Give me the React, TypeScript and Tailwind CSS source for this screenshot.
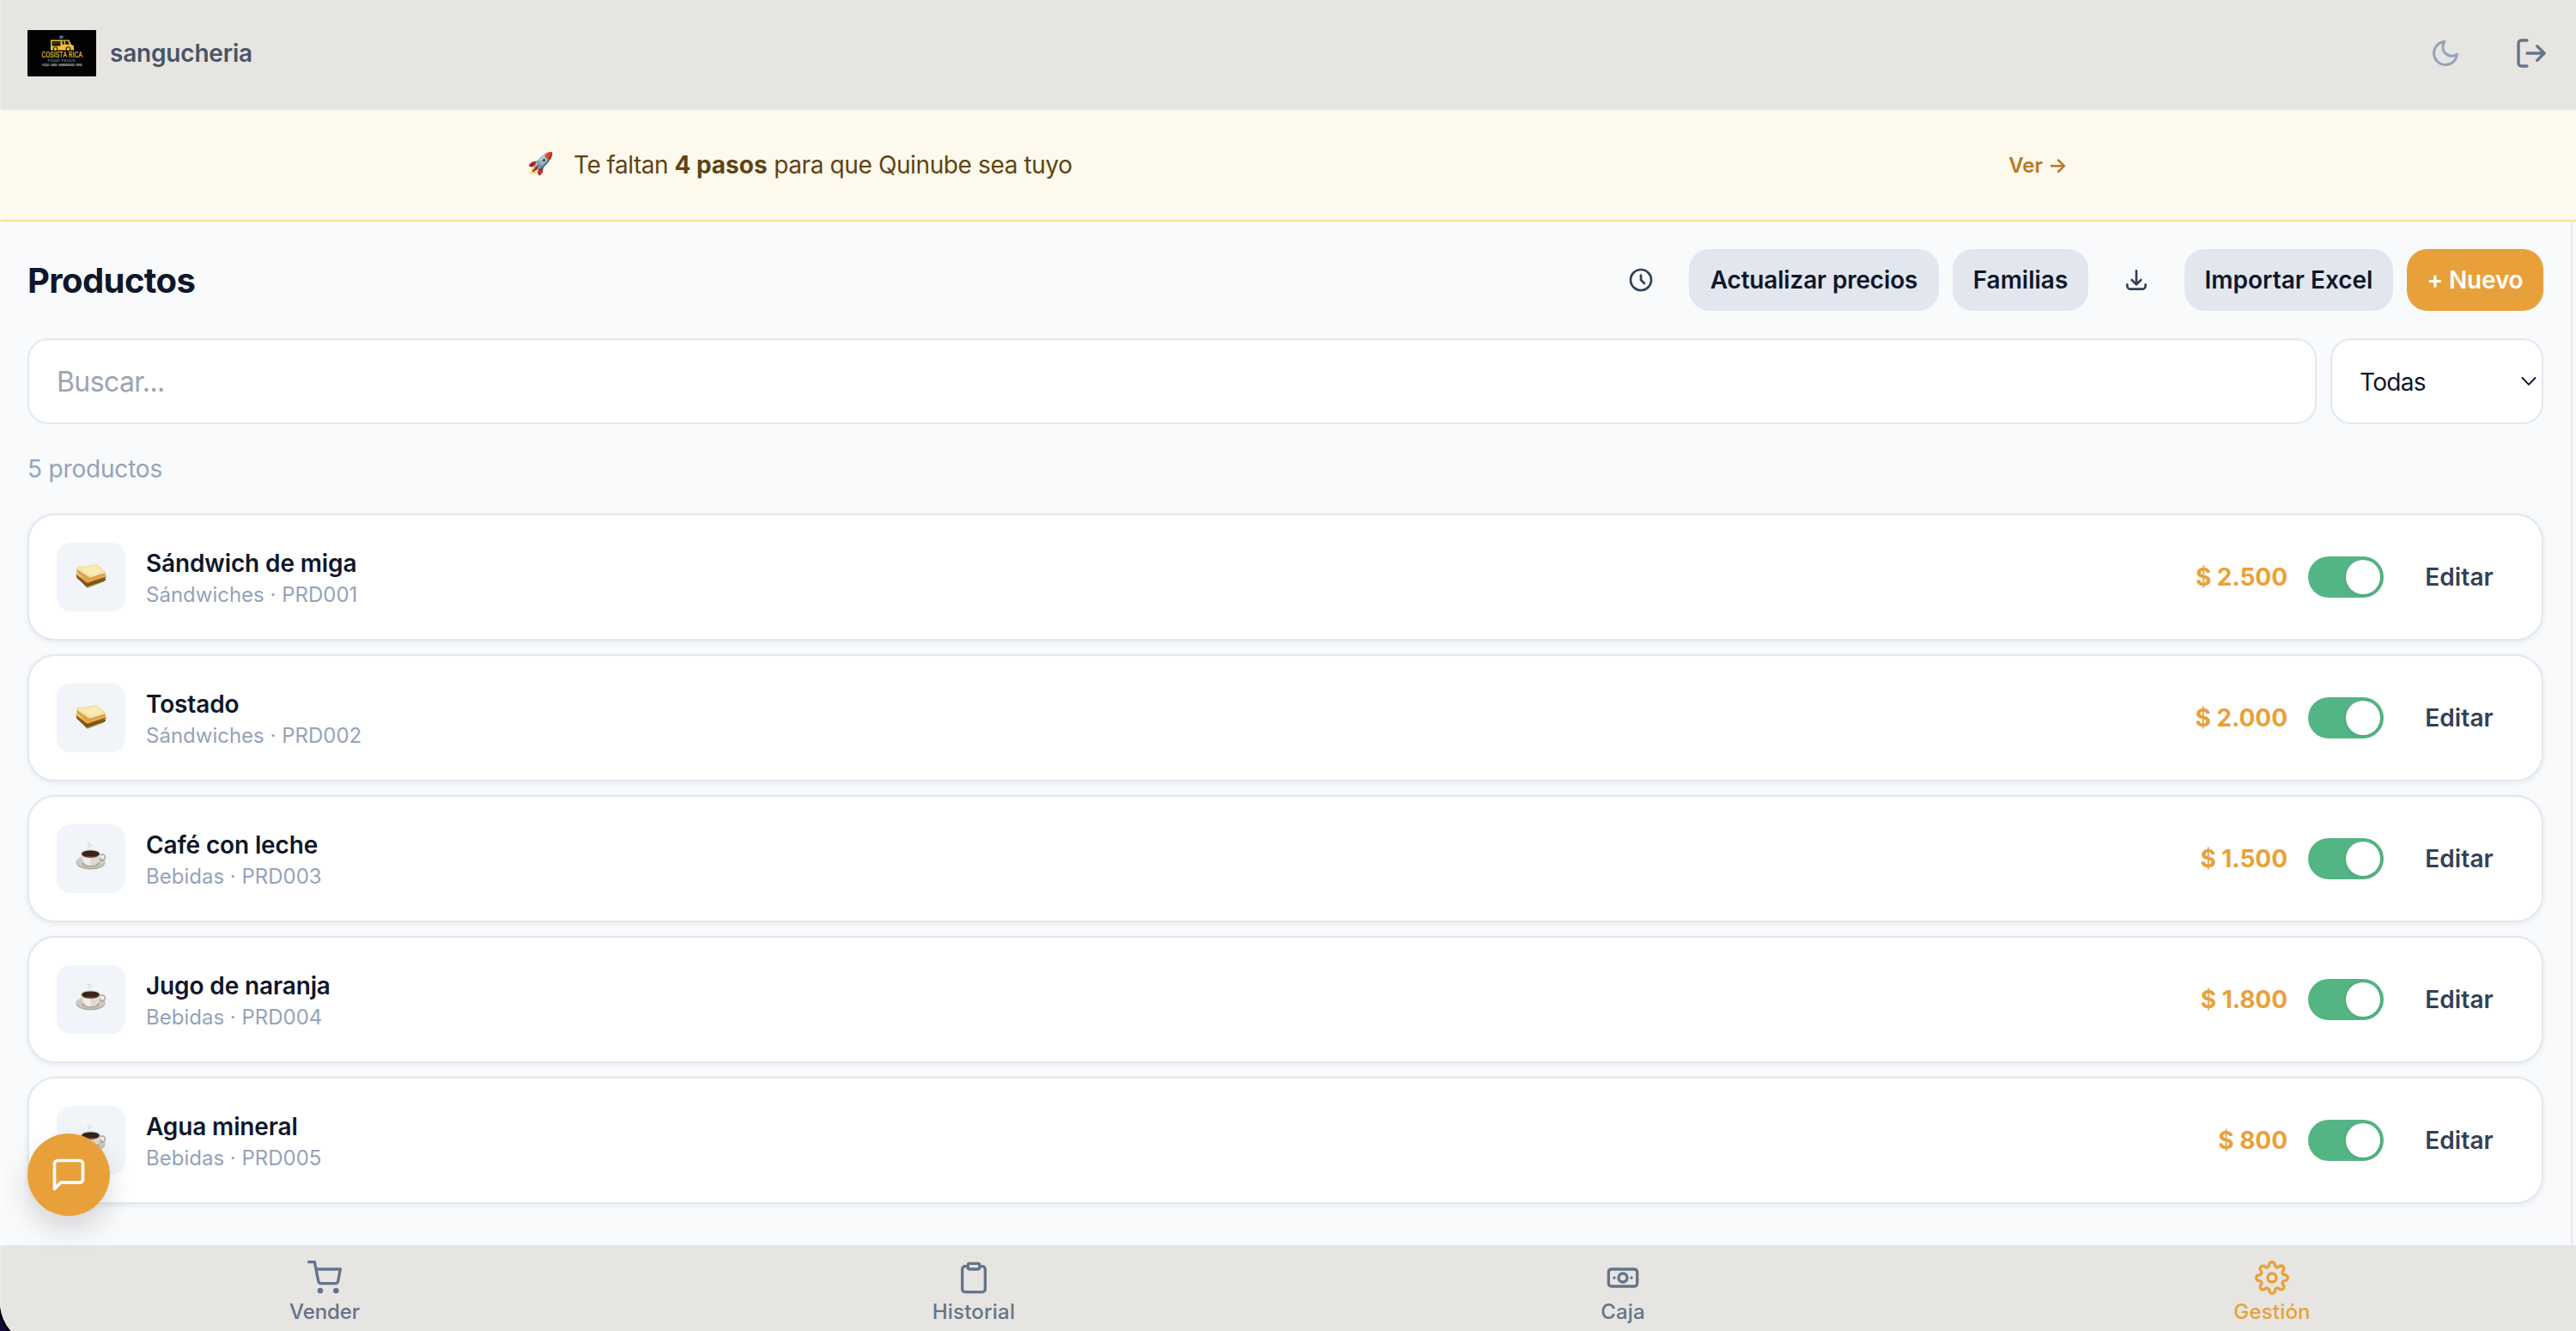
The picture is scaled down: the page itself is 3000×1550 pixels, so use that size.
import React from "react";

type Product = {
  name: string;
  category: string;
  code: string;
  price: string;
};

const products: Product[] = [
  { name: "Sándwich de miga", category: "Sándwiches", code: "PRD001", price: "$ 2.500" },
  { name: "Tostado", category: "Sándwiches", code: "PRD002", price: "$ 2.000" },
  { name: "Café con leche", category: "Bebidas", code: "PRD003", price: "$ 1.500" },
  { name: "Jugo de naranja", category: "Bebidas", code: "PRD004", price: "$ 1.800" },
  { name: "Agua mineral", category: "Bebidas", code: "PRD005", price: "$ 800" },
];

function Icon({
  className,
  width = 2,
  children,
}: {
  className: string;
  width?: number;
  children: React.ReactNode;
}) {
  return (
    <svg
      viewBox="0 0 24 24"
      fill="none"
      stroke="currentColor"
      strokeWidth={width}
      strokeLinecap="round"
      strokeLinejoin="round"
      className={className}
    >
      {children}
    </svg>
  );
}

function Sandwich() {
  return (
    <svg viewBox="0 0 36 30" className="mb-[3px] h-[30px] w-9">
      <path d="M1.500 15.500L12 27.500q.8 1.500 2.500.9L33 21.500q1.800-1 1.500-3.500L20 17z" fill="#c98a3c" />
      <path d="M1 14l11.500 10.500L35 17.500v2.300L13 27.200 1.200 16.800z" fill="#3f6b22" />
      <path d="M.8 12.500l11.700 9.500L35.300 15v2L13 24.800.8 14.800z" fill="#b8402a" />
      <path d="M.6 10.500l12.400 9.200L35.500 13v2.200L14 22.600.6 13z" fill="#f2b93f" />
      <path d="M1.500 5v5.500L13.500 20q1.500 1 3 .3L34.500 14q.8-2-.2-4.500z" fill="#d9a253" />
      <path
        d="M1.500 5.500Q1.500 3.500 4 3.300L8 3.500 23 .9q2-.3 3 1.200L34.500 9.500q.6 1.200-.9 1.900L18 16.300q-1.800.5-3-.5L2 7.300q-.6-.8-.5-1.800z"
        fill="#f5e3a1"
      />
      <path d="M5 5.200l4 .2L23.500 2.800l8 6.800-14.300 4.500z" fill="#f9ebb5" />
    </svg>
  );
}

function Coffee() {
  return (
    <svg viewBox="0 0 36 33" className="mb-[5px] h-[33px] w-9">
      <path
        d="M14 1.500q2-1 2.500.8t2.500 1M14.500 4q1.800 0 2 2"
        fill="none"
        stroke="#c9c9ca"
        strokeWidth="1"
        strokeLinecap="round"
      />
      <ellipse cx="17.500" cy="23.500" rx="17" ry="8" fill="#b3ada3" />
      <ellipse cx="17.500" cy="22.500" rx="16.500" ry="7.200" fill="#cfcac1" />
      <ellipse cx="17.500" cy="24.500" rx="10" ry="4" fill="#a39c90" />
      <circle cx="31" cy="17.500" r="3.400" fill="none" stroke="#a8a299" strokeWidth="1.500" />
      <path d="M6 13.500q.3 9.500 5.500 12.700 6 2.200 12 0 5.200-3.200 5.500-12.700z" fill="#dedad3" />
      <path d="M8.500 18q1 6 4.500 8 2.200.9 4.500.9V18z" fill="#efedea" />
      <ellipse cx="17.500" cy="13.300" rx="11.500" ry="5" fill="#d3cec6" />
      <ellipse cx="17.500" cy="13.500" rx="10.300" ry="4.100" fill="#3b2218" />
      <path d="M8.500 15.500q9 4 18 0-9 1.200-18 0z" fill="#6b4431" />
    </svg>
  );
}

function Logo() {
  return (
    <svg viewBox="0 0 80 54" className="h-[54px] w-20 shrink-0">
      <rect width="80" height="54" rx="1" fill="#020202" />
      <path d="M37 10l1-4 3 1 2 1-2 1-1 1z" fill="#3f7f93" />
      <path d="M27 11.500h21.500l2.500 5.500 3 1.200V23.500H27z" fill="#edbd3c" />
      <path d="M28.500 13h10v5.500h-10zM40.500 12.800h2.200v4h-2.200zM44 12.800h3.200l1.600 4H44z" fill="#1c1708" />
      <path d="M28.500 15h10" stroke="#8a6b1c" strokeWidth="0.6" />
      <circle cx="32.500" cy="22" r="2.400" fill="#edbd3c" stroke="#020202" strokeWidth="1" />
      <circle cx="47.500" cy="22" r="2.400" fill="#edbd3c" stroke="#020202" strokeWidth="1" />
      <text
        x="16.500"
        y="32.400"
        textLength="47.500"
        lengthAdjust="spacingAndGlyphs"
        fontFamily="Roboto, sans-serif"
        fontWeight="500"
        fontSize="9.600"
        fill="#e3b63b"
      >
        COSISTA RICA
      </text>
      <text
        x="23.500"
        y="36.900"
        textLength="32.500"
        lengthAdjust="spacingAndGlyphs"
        fontFamily="Roboto, sans-serif"
        fontWeight="600"
        fontSize="4"
        fill="#44798a"
      >
        FOOD TRUCK
      </text>
      <text
        x="17"
        y="41.500"
        textLength="46.500"
        lengthAdjust="spacingAndGlyphs"
        fontFamily="Roboto, sans-serif"
        fontWeight="700"
        fontSize="2.600"
        fill="#c4c4c4"
      >
        PIZZAS · LOMOS · HAMBURGUESAS · PAPAS
      </text>
    </svg>
  );
}

function Header() {
  return (
    <header className="flex h-32 items-center border-b-2 border-[#e2e8f0] bg-[#e7e5e1] pr-14 pb-0.5 pl-8">
      <Logo />
      <span className="ml-4 text-[28px] font-semibold tracking-[-0.19px] text-[#475569]">
        sangucheria
      </span>
      <div className="ml-auto flex items-center gap-[62px]">
        <Icon className="size-9 text-[#94a3b8]">
          <path d="M21 12.790A9 9 0 1 1 11.210 3 7 7 0 0 0 21 12.790z" />
        </Icon>
        <Icon className="size-10 text-[#64748b]">
          <path d="M9 21H5a2 2 0 0 1-2-2V5a2 2 0 0 1 2-2h4" />
          <path d="M16 17l5-5-5-5" />
          <path d="M21 12H9" />
        </Icon>
      </div>
    </header>
  );
}

function Banner() {
  return (
    <div className="h-[130px] border-b-2 border-[#fadf9b] bg-[#fdf9ec]">
      <div className="mx-auto flex h-full w-[1792px] items-center text-[28px] text-[#5f4314]">
        <span className="-ml-0.5 w-[54px] pb-0.5 text-[25px]">🚀</span>
        <span className="whitespace-pre">
          <span className="tracking-[-0.5px]">Te faltan </span>
          <strong className="font-bold">4 pasos</strong>
          <span className="tracking-[-0.38px]"> para que Quinube sea tuyo</span>
        </span>
        <span className="ml-auto pt-px text-[24px] font-semibold text-[#b9781d]">Ver →</span>
      </div>
    </div>
  );
}

function Toolbar() {
  return (
    <div className="flex items-center">
      <h1 className="pt-0.5 text-[40px] font-bold tracking-[-0.59px] text-[#0f172a]">Productos</h1>
      <div className="ml-auto flex h-[72px] items-center gap-4 text-[28px] font-semibold text-[#0f172a]">
        <button className="flex h-full w-20 items-center justify-center">
          <Icon className="size-8 text-[#334155]">
            <path d="M12 8v4l3 3m6-3a9 9 0 11-18 0 9 9 0 0118 0z" />
          </Icon>
        </button>
        <button className="h-full w-[291px] rounded-3xl bg-[#e2e6ee] tracking-[-0.18px]">
          Actualizar precios
        </button>
        <button className="h-full w-[158px] rounded-3xl bg-[#e2e6ee]">Familias</button>
        <button className="flex h-full w-20 items-center justify-center">
          <Icon className="size-8 text-[#334155]">
            <path d="M4 16v1a3 3 0 003 3h10a3 3 0 003-3v-1m-4-4l-4 4m0 0l-4-4m4 4V4" />
          </Icon>
        </button>
        <button className="h-full w-[243px] rounded-3xl bg-[#e2e6ee]">Importar Excel</button>
        <button className="h-full w-[159px] rounded-3xl bg-[#e8a13a] tracking-[-0.2px] text-white">
          + Nuevo
        </button>
      </div>
    </div>
  );
}

function Filters() {
  return (
    <div className="mt-8 flex h-[100px] gap-4">
      <div className="flex flex-1 items-center rounded-3xl border-2 border-[#e2e8f0] bg-white px-8 pt-0.5 text-[32px] tracking-[-0.6px] text-[#9ca3af]">
        Buscar...
      </div>
      <div className="flex w-[248px] items-center rounded-3xl border-2 border-[#e2e8f0] bg-white pr-1.5 pl-8 text-[28px] tracking-[-0.7px] text-[#0f172a]">
        <span className="pt-0.5">Todas</span>
        <svg viewBox="0 0 18 12" className="ml-auto h-3 w-[18px]" fill="none">
          <path
            d="M1.500 2l7.500 7.800 7.500-7.800"
            stroke="currentColor"
            strokeWidth="1.900"
            strokeLinecap="round"
            strokeLinejoin="round"
          />
        </svg>
      </div>
    </div>
  );
}

function ProductCard({ product }: { product: Product }) {
  return (
    <div className="flex h-[148px] items-center rounded-[32px] border-2 border-[#e2e8f0] bg-white px-8 shadow-[0_2px_6px_rgba(15,23,42,0.07)]">
      <div className="flex size-20 items-center justify-center rounded-2xl bg-[#f1f5f9]">
        {product.category === "Bebidas" ? <Coffee /> : <Sandwich />}
      </div>
      <div className="ml-6">
        <div className="text-[28px] leading-[42px] font-semibold tracking-[-0.13px] text-[#0f172a]">
          {product.name}
        </div>
        <div className="text-[24px] leading-8 text-[#94a3b8]">
          {product.category} · {product.code}
        </div>
      </div>
      <div className="ml-auto flex items-center gap-6">
        <span className="text-[28px] font-bold tracking-[-0.05px] text-[#e8a13a]">
          {product.price}
        </span>
        <div className="flex h-12 w-[88px] items-center justify-end rounded-full bg-[#54b584] p-1">
          <div className="size-10 rounded-full bg-white shadow-[0_1px_4px_rgba(0,0,0,0.12)]" />
        </div>
        <button className="w-32 text-[28px] font-semibold tracking-[0.1px] text-[#334155]">
          Editar
        </button>
      </div>
    </div>
  );
}

const tabs = [
  {
    label: "Vender",
    color: "text-[#64748b]",
    tracking: "tracking-[-0.1px]",
    icon: (
      <>
        <circle cx="9" cy="21" r="1" />
        <circle cx="20" cy="21" r="1" />
        <path d="M1 1h4l2.680 13.390a2 2 0 0 0 2 1.610h9.720a2 2 0 0 0 2-1.610L23 6H6" />
      </>
    ),
  },
  {
    label: "Historial",
    color: "text-[#64748b]",
    tracking: "tracking-[0.2px]",
    icon: (
      <>
        <path d="M16 4h2a2 2 0 0 1 2 2v14a2 2 0 0 1-2 2H6a2 2 0 0 1-2-2V6a2 2 0 0 1 2-2h2" />
        <rect x="8" y="2" width="8" height="4" rx="1" />
      </>
    ),
  },
  {
    label: "Caja",
    color: "text-[#64748b]",
    tracking: "tracking-[0.1px]",
    icon: (
      <>
        <rect x="2" y="6" width="20" height="12" rx="2" />
        <circle cx="12" cy="12" r="3" />
        <path d="M6 12h.01M18 12h.01" />
      </>
    ),
  },
  {
    label: "Gestión",
    color: "text-[#e8a13a]",
    tracking: "tracking-[0.2px]",
    icon: (
      <>
        <circle cx="12" cy="12" r="3" />
        <path d="M19.400 15a1.650 1.650 0 0 0 .33 1.820l.06.06a2 2 0 0 1 0 2.830 2 2 0 0 1-2.830 0l-.06-.06a1.650 1.650 0 0 0-1.820-.33 1.650 1.650 0 0 0-1 1.510V21a2 2 0 0 1-2 2 2 2 0 0 1-2-2v-.09A1.650 1.650 0 0 0 9 19.400a1.650 1.650 0 0 0-1.820.33l-.06.06a2 2 0 0 1-2.830 0 2 2 0 0 1 0-2.830l.06-.06a1.650 1.650 0 0 0 .33-1.820 1.650 1.650 0 0 0-1.510-1H3a2 2 0 0 1-2-2 2 2 0 0 1 2-2h.09A1.650 1.650 0 0 0 4.600 9a1.650 1.650 0 0 0-.33-1.820l-.06-.06a2 2 0 0 1 0-2.830 2 2 0 0 1 2.830 0l.06.06a1.650 1.650 0 0 0 1.820.33H9a1.650 1.650 0 0 0 1-1.510V3a2 2 0 0 1 2-2 2 2 0 0 1 2 2v.09a1.650 1.650 0 0 0 1 1.510 1.650 1.650 0 0 0 1.820-.33l.06-.06a2 2 0 0 1 2.830 0 2 2 0 0 1 0 2.830l-.06.06a1.650 1.650 0 0 0-.33 1.820V9a1.650 1.650 0 0 0 1.510 1H21a2 2 0 0 1 2 2 2 2 0 0 1-2 2h-.09a1.650 1.650 0 0 0-1.510 1z" />
      </>
    ),
  },
];

function TabBar() {
  return (
    <nav className="grid h-[118px] grid-cols-4 border-t-2 border-[#e2e8f0] bg-[#e7e5e1]">
      {tabs.map((tab) => (
        <div key={tab.label} className={`flex flex-col items-center pt-4 ${tab.color}`}>
          <Icon className="size-10">{tab.icon}</Icon>
          <span className={`mt-0.5 text-[24px] leading-9 font-[450] ${tab.tracking}`}>
            {tab.label}
          </span>
        </div>
      ))}
    </nav>
  );
}

export default function App() {
  return (
    <div className="relative h-[1550px] w-[3000px] overflow-hidden bg-[#160a3a] font-['Inter',sans-serif]">
      <div className="relative flex h-[1568px] w-[3024px] flex-col overflow-hidden rounded-b-[52px] bg-[#f8fafc] shadow-[0_0_0_3px_#050308]">
        <Header />
        <Banner />
        <div className="flex min-h-0 flex-1">
          <main className="min-w-0 flex-1 px-8 pt-8">
            <Toolbar />
            <Filters />
            <p className="mt-[31px] text-[28px] leading-[42px] tracking-[-0.18px] text-[#94a3b8]">
              5 productos
            </p>
            <div className="mt-[31px] flex flex-col gap-4">
              {products.map((product) => (
                <ProductCard key={product.code} product={product} />
              ))}
            </div>
          </main>
          <div className="w-[30px] shrink-0 border-l-2 border-[#e8e8e8] bg-[#fafafa]" />
        </div>
        <TabBar />
        <button className="absolute top-[1320px] left-8 flex size-24 items-center justify-center rounded-full bg-[#e8a13a] text-white shadow-[0_16px_32px_rgba(0,0,0,0.15)]">
          <Icon className="size-11">
            <path d="M21 15a2 2 0 0 1-2 2H7l-4 4V5a2 2 0 0 1 2-2h14a2 2 0 0 1 2 2z" />
          </Icon>
        </button>
        <div className="pointer-events-none absolute inset-y-0 left-0 w-0.5 bg-white/25" />
      </div>
    </div>
  );
}
